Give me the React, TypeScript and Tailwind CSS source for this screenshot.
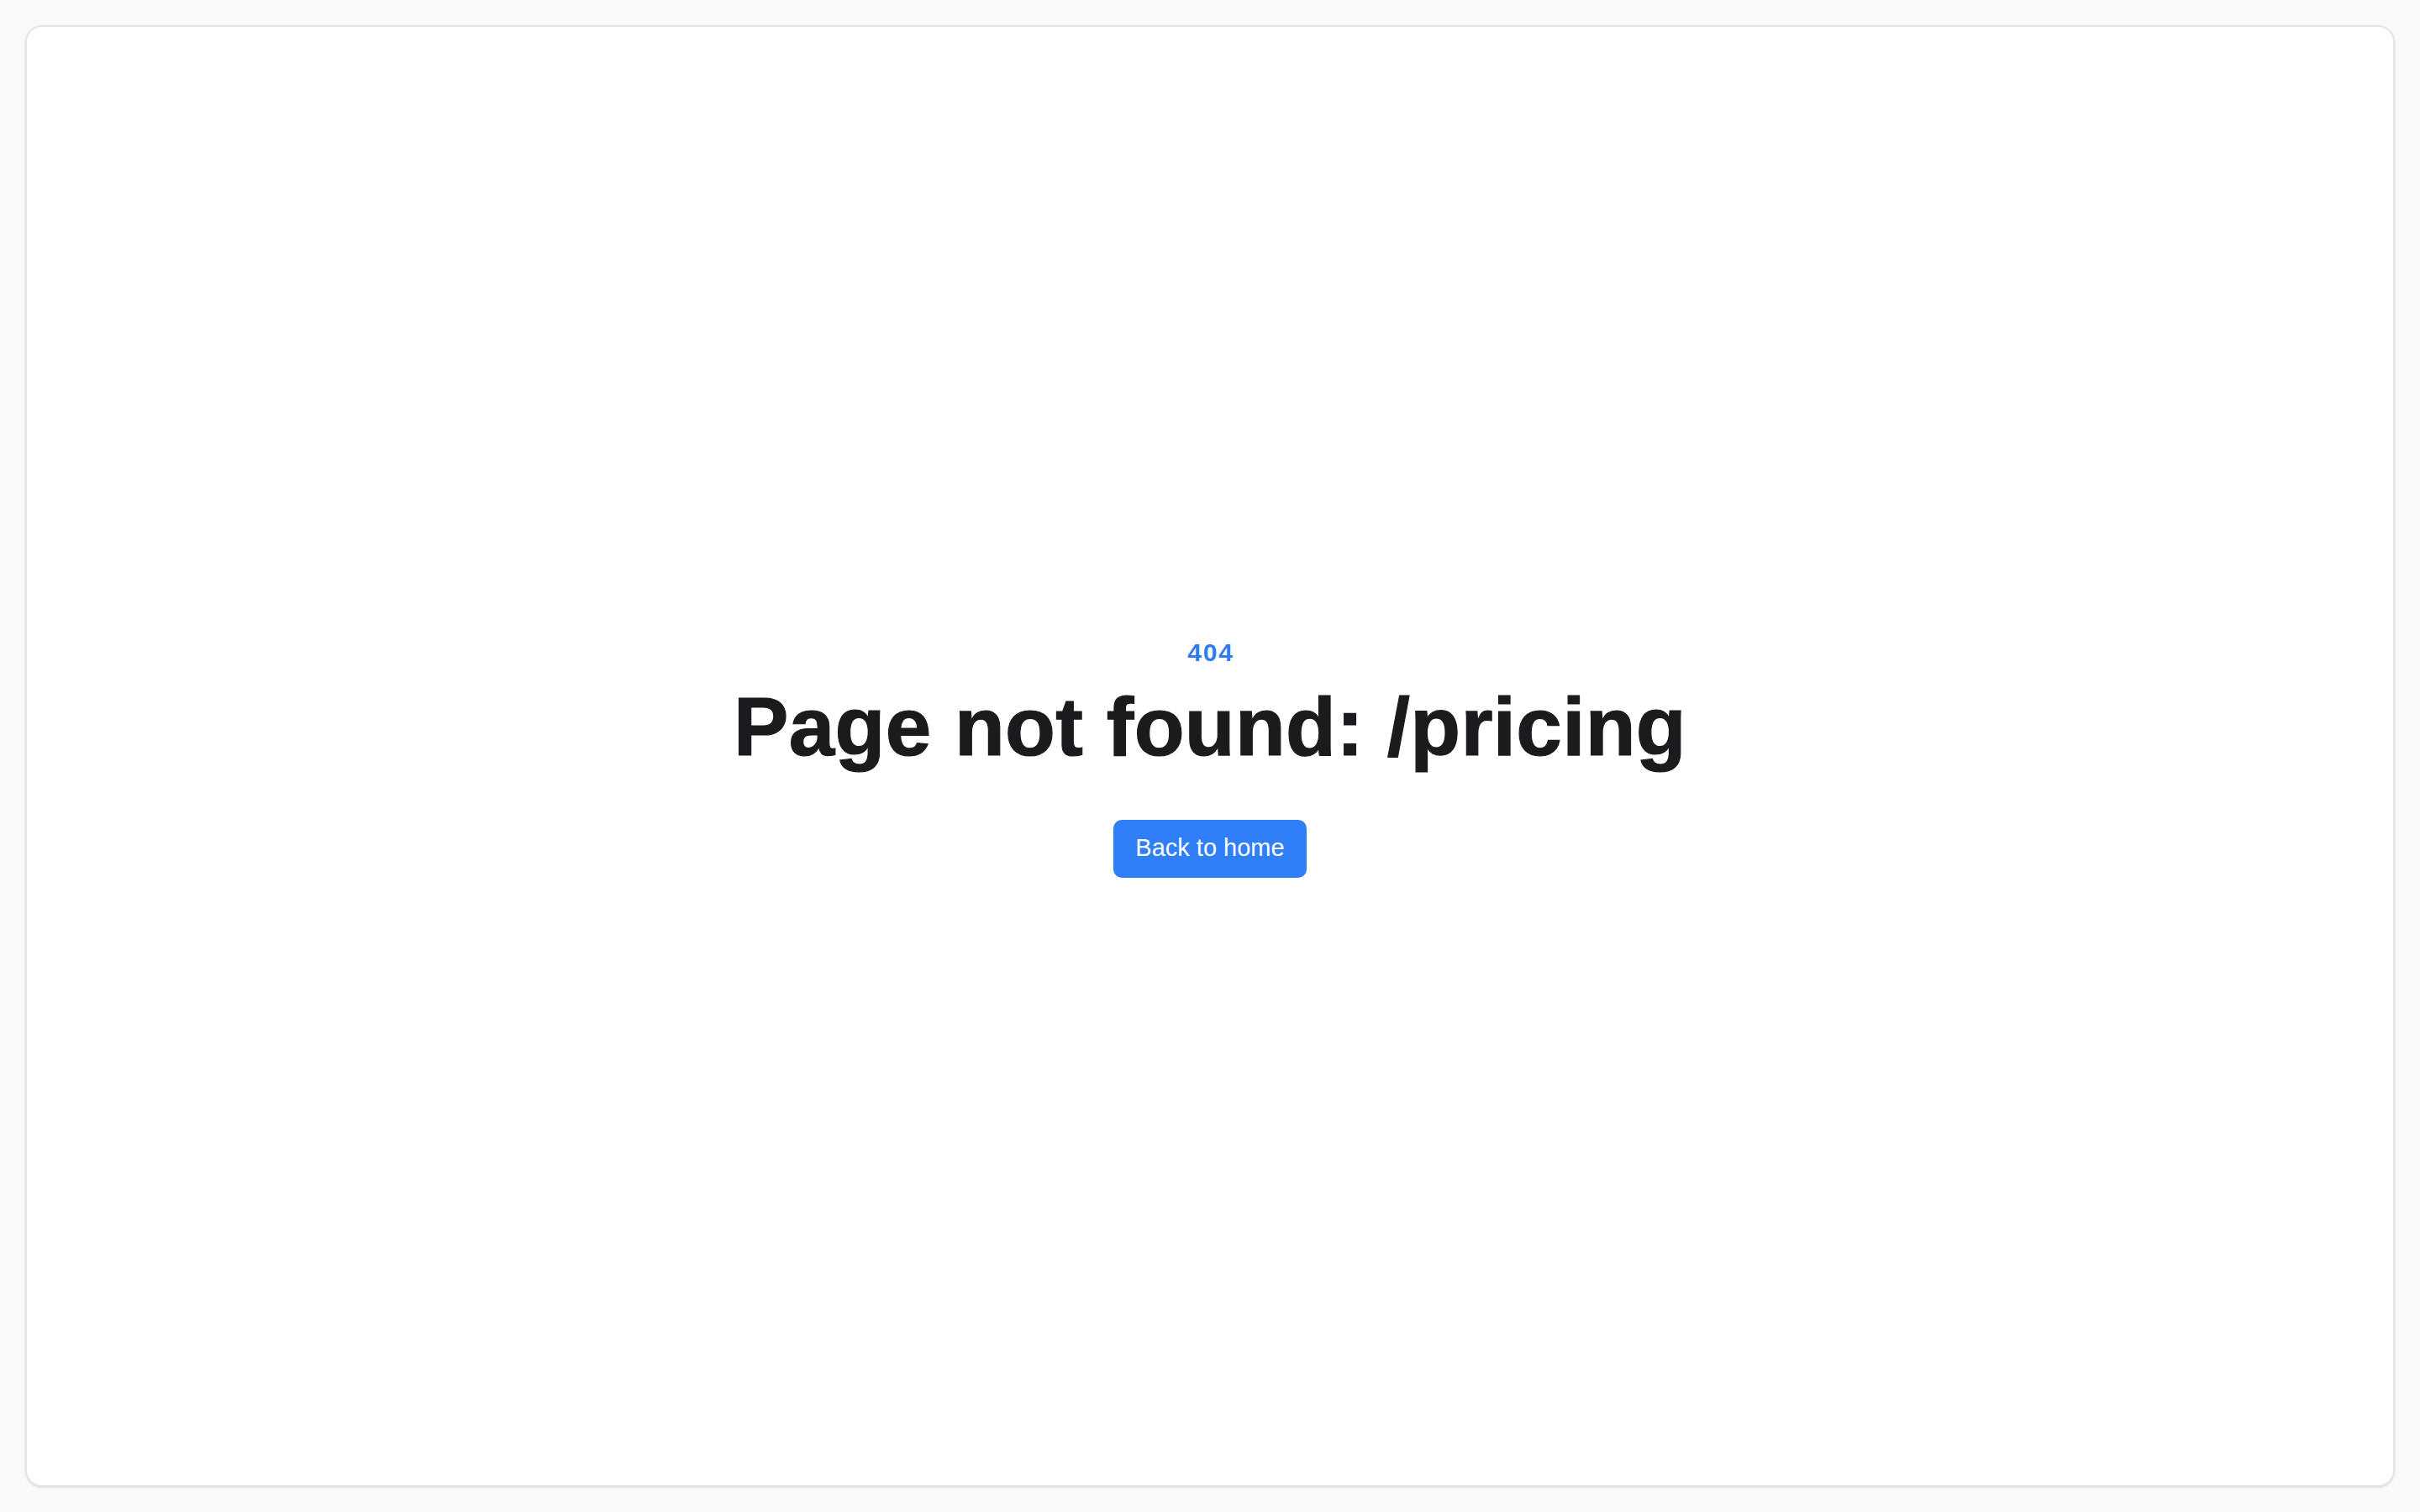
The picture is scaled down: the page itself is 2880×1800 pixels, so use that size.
const App = () => {
  return (
    <div
      className="h-screen w-full bg-[#fafafa] p-[30px] flex"
      style={{ fontFamily: '"Liberation Sans", Arial, sans-serif' }}
    >
      <div className="flex-1 rounded-[20px] border-2 border-[#e6e6e6] bg-white shadow-sm flex flex-col items-center justify-center">
        <p className="text-[30px] leading-none font-bold text-[#2f7cf0] tracking-[0.06em] pl-[0.06em] mt-[6px]">
          404
        </p>
        <h1 className="mt-[24px] text-[98px] leading-none font-bold text-[#1b1b1d] tracking-[0.003em] [-webkit-text-stroke:1.2px_#1b1b1d]">
          Page not found: /pricing
        </h1>
        <button className="mt-[62px] h-[69px] w-[230px] rounded-[10px] bg-[#2f80f8] text-[29px] text-white">
          Back to home
        </button>
      </div>
    </div>
  );
};

export default App;
